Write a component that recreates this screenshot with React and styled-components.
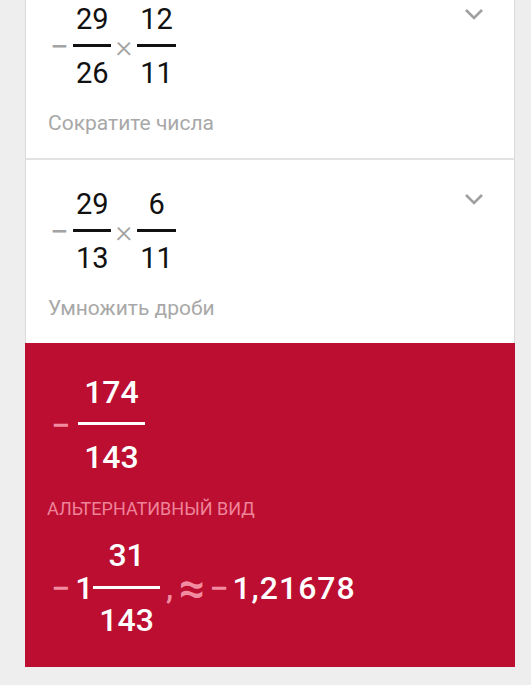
import React from "react";
import styled, { createGlobalStyle } from "styled-components";

const GlobalStyle = createGlobalStyle`
  html, body {
    margin: 0;
    padding: 0;
    background: #eeeeee;
    font-family: Roboto, "Noto Sans", "Liberation Sans", sans-serif;
  }
`;

const Page = styled.div`
  min-height: 100vh;
  background: #eeeeee;
  overflow: hidden;
`;

// scrolled list: first card is cut off at the top
const Column = styled.div`
  margin: -27px 16px 0 25px;
`;

const Step = styled.div`
  display: flex;
  justify-content: space-between;
  align-items: flex-start;
  background: #ffffff;
  border-left: 1px solid #dadada;
  border-right: 1px solid #dadada;
  border-top: 2px solid #e2e2e2;
  padding: 27px 30px 20px 22px;
`;

const StepBody = styled.div`
  display: flex;
  flex-direction: column;
`;

const Expr = styled.div`
  display: flex;
  align-items: center;
  margin-left: ${p => p.$indent || 0}px;
  color: ${p => (p.$light ? "#ffffff" : "#111111")};
`;

const Op = styled.span`
  font-size: ${p => p.$size || 28}px;
  line-height: 1;
  color: ${p => p.$color || "#a3a3a3"};
  font-weight: ${p => p.$weight || 400};
  margin: 0 ${p => p.$right ?? 0}px 0 ${p => p.$left ?? 0}px;
`;

const Frac = styled.span`
  display: inline-flex;
  flex-direction: column;
  align-items: center;
  font-size: ${p => p.$size}px;
  font-weight: ${p => p.$weight || 400};
  line-height: ${p => p.$lh}px;
  padding: 0 ${p => p.$pad}px;
`;

const Bar = styled.span`
  align-self: stretch;
  height: 3px;
  background: currentColor;
  margin: ${p => p.$above}px -${p => p.$pad}px ${p => p.$below}px;
`;

const Hint = styled.div`
  margin-top: 18px;
  font-size: 21px;
  line-height: 30px;
  color: #a8a8a8;
`;

const Chevron = styled.svg`
  margin-top: 6px;
  flex-shrink: 0;
`;

const Result = styled.div`
  background: #bb0e31;
  padding: 30px 22px 28px;
  color: #ffffff;
`;

const AltLabel = styled.div`
  margin: 23px 0 17px;
  font-size: 18px;
  line-height: 20px;
  color: #ef8399;
  text-transform: uppercase;
`;

const Whole = styled.span`
  font-size: 32px;
  font-weight: 500;
  line-height: 1;
`;

const Decimal = styled.span`
  font-size: 32px;
  font-weight: 500;
  line-height: 1;
  letter-spacing: 1px;
`;

const Fraction = ({ top, bottom, size, lh, pad, above, below, weight }) => (
  <Frac $size={size} $lh={lh} $pad={pad} $weight={weight}>
    <span>{top}</span>
    <Bar $above={above} $below={below} $pad={pad} />
    <span>{bottom}</span>
  </Frac>
);

const SmallFrac = ({ top, bottom }) => (
  <Fraction top={top} bottom={bottom} size={29} lh={34} pad={3} above={8} below={9} />
);

const ChevronDown = () => (
  <Chevron width="20" height="12" viewBox="0 0 20 12">
    <polyline points="2,2 10,10 18,2" fill="none" stroke="#a0a0a0" strokeWidth="2.6" />
  </Chevron>
);

const steps = [
  { a: ["29", "26"], b: ["12", "11"], hint: "Сократите числа" },
  { a: ["29", "13"], b: ["6", "11"], hint: "Умножить дроби" },
];

const pink = "#f28ca1";

export default function App() {
  return (
    <Page>
      <GlobalStyle />
      <Column>
        {steps.map(s => (
          <Step key={s.hint}>
            <StepBody>
              <Expr $indent={2}>
                <Op $size={33} $right={4}>−</Op>
                <SmallFrac top={s.a[0]} bottom={s.a[1]} />
                <Op $size={32} $weight={300} $left={4} $right={5}>×</Op>
                <SmallFrac top={s.b[0]} bottom={s.b[1]} />
              </Expr>
              <Hint>{s.hint}</Hint>
            </StepBody>
            <ChevronDown />
          </Step>
        ))}
        <Result>
          <Expr $light $indent={4}>
            <Op $size={34} $color={pink} $weight={500} $right={8}>−</Op>
            <Fraction top="174" bottom="143" size={32} lh={38} pad={6} above={11} below={13} weight={500} />
          </Expr>
          <AltLabel>Альтернативный вид</AltLabel>
          <Expr $light $indent={4}>
            <Op $size={34} $color={pink} $weight={500} $right={5}>−</Op>
            <Whole>1</Whole>
            <Fraction top="31" bottom="143" size={32} lh={38} pad={6} above={12} below={12} weight={500} />
            <Op $size={32} $color={pink} $weight={500} $left={6} $right={6}>,</Op>
            <Op $size={46} $color={pink} $weight={500} $right={4}>≈</Op>
            <Op $size={34} $color={pink} $weight={500} $right={4}>−</Op>
            <Decimal>1,21678</Decimal>
          </Expr>
        </Result>
      </Column>
    </Page>
  );
}
